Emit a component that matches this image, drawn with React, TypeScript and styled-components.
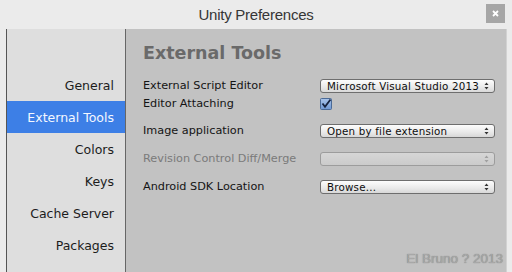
import styled, { createGlobalStyle } from "styled-components";

const GlobalStyle = createGlobalStyle`
    html, body {
        margin: 0;
        padding: 0;
        background: #ebebeb;
    }
`;

const Window = styled.div`
    width: 512px;
    height: 272px;
    display: flex;
    flex-direction: column;
    overflow: hidden;
    background: #ebebeb;
`;

const TitleBar = styled.div`
    height: 29px;
    display: grid;
    grid-template-columns: 1fr auto 1fr;
    align-items: start;
`;

const Title = styled.div`
    grid-column: 2;
    font-family: "Liberation Sans", Arial, sans-serif;
    font-size: 15px;
    letter-spacing: -0.25px;
    line-height: 29px;
    color: #363636;
`;

const CloseButton = styled.div`
    grid-column: 3;
    justify-self: end;
    width: 19px;
    height: 19px;
    margin: 4px 7px 0 0;
    background: #a6a6a6;
    display: flex;
    align-items: center;
    justify-content: center;
`;

const Body = styled.div`
    flex: 1;
    display: flex;
    padding: 0 0 0 6px;
`;

const Sidebar = styled.ul`
    width: 118px;
    margin: 0;
    padding: 40px 0 0;
    list-style: none;
    background: #dedede;
    border-left: 1px solid #555;
    border-right: 1px solid #666;
`;

const NavItem = styled.li<{ $active?: boolean }>`
    height: 32px;
    line-height: 34px;
    padding-right: 11px;
    text-align: right;
    font-family: "DejaVu Sans", Verdana, sans-serif;
    font-size: 12.5px;
    color: ${(p) => (p.$active ? "#f4f8ff" : "#1c1c1c")};
    background: ${(p) => (p.$active ? "#3d7fe6" : "transparent")};
`;

const Content = styled.div`
    flex: 1;
    margin-right: 5px;
    padding: 14px 3px 5px 17px;
    background: #c2c2c2;
    border-right: 1px solid #d2d2d2;
    display: flex;
    flex-direction: column;
`;

const Heading = styled.h1`
    margin: 0 0 14px;
    font-family: "DejaVu Sans", Verdana, sans-serif;
    font-weight: bold;
    font-size: 17.5px;
    line-height: 20px;
    color: #6a6a6a;
`;

const Row = styled.div<{ $gap?: number }>`
    height: 18px;
    margin-top: ${(p) => p.$gap ?? 0}px;
    display: grid;
    grid-template-columns: 177px 175px;
    align-items: center;
`;

const Label = styled.span<{ $disabled?: boolean }>`
    font-family: "DejaVu Sans", Verdana, sans-serif;
    font-size: 11.25px;
    line-height: 18px;
    color: ${(p) => (p.$disabled ? "#7a7a7a" : "#141414")};
`;

const Dropdown = styled.div<{ $disabled?: boolean }>`
    height: 14px;
    box-sizing: border-box;
    display: flex;
    align-items: center;
    justify-content: space-between;
    padding: 0 5px 0 6px;
    border: 1px solid ${(p) => (p.$disabled ? "#9c9c9c" : "#6e6e6e")};
    border-radius: 3px;
    background: ${(p) =>
        p.$disabled
            ? "linear-gradient(#d6d6d6, #cbcbcb)"
            : "linear-gradient(#fdfdfd, #e9e9e9 60%, #d8d8d8)"};
    font-family: "DejaVu Sans", Verdana, sans-serif;
    font-size: 10.3px;
    letter-spacing: 0.2px;
    line-height: 12px;
    color: #0d0d0d;
`;

const Checkbox = styled.div`
    width: 12px;
    height: 12px;
    display: flex;
`;

const Watermark = styled.div`
    margin-top: auto;
    align-self: flex-end;
    font-family: "Liberation Sans", Arial, sans-serif;
    font-size: 13.5px;
    line-height: 16px;
    color: #a8a8a8;
    text-shadow: 0 0 1px #727272;
`;

const Arrows = ({ faded }: { faded?: boolean }) => (
    <svg width="5" height="8" viewBox="0 0 5 8">
        <path d="M2.5 0.5 L4.5 3 H0.5 Z M2.5 7.5 L4.5 5 H0.5 Z" fill={faded ? "#a0a0a0" : "#333"} />
    </svg>
);

const navItems = ["General", "External Tools", "Colors", "Keys", "Cache Server", "Packages"];

function App() {
    return (
        <Window>
            <GlobalStyle />
            <TitleBar>
                <Title>Unity Preferences</Title>
                <CloseButton>
                    <svg width="7" height="7" viewBox="0 0 7 7">
                        <path d="M1 1 L6 6 M6 1 L1 6" stroke="#fff" strokeWidth="1.8" />
                    </svg>
                </CloseButton>
            </TitleBar>
            <Body>
                <Sidebar>
                    {navItems.map((item) => (
                        <NavItem key={item} $active={item === "External Tools"}>{item}</NavItem>
                    ))}
                </Sidebar>
                <Content>
                    <Heading>External Tools</Heading>
                    <Row>
                        <Label>External Script Editor</Label>
                        <Dropdown>Microsoft Visual Studio 2013<Arrows /></Dropdown>
                    </Row>
                    <Row>
                        <Label>Editor Attaching</Label>
                        <Checkbox>
                            <svg width="12" height="12" viewBox="0 0 12 12">
                                <defs>
                                    <linearGradient id="cb" x1="0" y1="0" x2="0" y2="1">
                                        <stop offset="0" stopColor="#a9c4ea" />
                                        <stop offset="1" stopColor="#6f98d4" />
                                    </linearGradient>
                                </defs>
                                <rect x="0.5" y="0.5" width="11" height="11" rx="1" fill="url(#cb)" stroke="#4b6a96" />
                                <path d="M2.5 5.5 L5 8.8 L10.5 1.5" fill="none" stroke="#16233f" strokeWidth="1.8" />
                            </svg>
                        </Checkbox>
                    </Row>
                    <Row $gap={9}>
                        <Label>Image application</Label>
                        <Dropdown>Open by file extension<Arrows /></Dropdown>
                    </Row>
                    <Row $gap={10}>
                        <Label $disabled>Revision Control Diff/Merge</Label>
                        <Dropdown $disabled><span /><Arrows faded /></Dropdown>
                    </Row>
                    <Row $gap={10}>
                        <Label>Android SDK Location</Label>
                        <Dropdown>Browse...<Arrows /></Dropdown>
                    </Row>
                    <Watermark>El Bruno ? 2013</Watermark>
                </Content>
            </Body>
        </Window>
    );
}

export default App;
